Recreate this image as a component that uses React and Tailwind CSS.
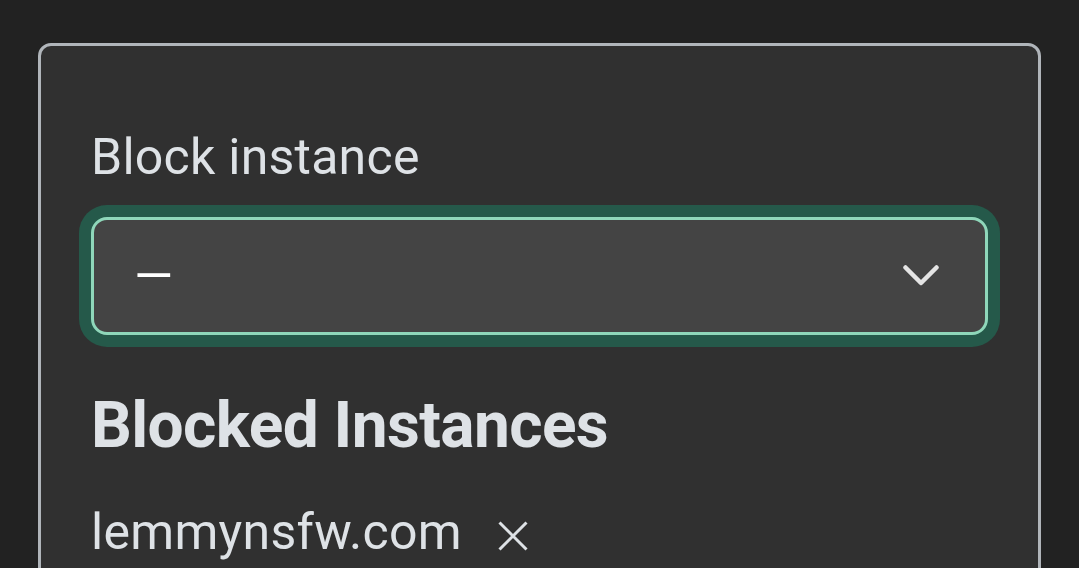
export default function App() {
  return (
    <div className="min-h-screen bg-[#222222] px-[38px] pt-[43px] font-['Roboto',sans-serif] text-[#dee2e6]">
      <div className="h-[560px] rounded-[13px] border-[3px] border-[#b0b5ba] bg-[#303030] px-[50px] pt-[74px]">
        <label className="block text-[50px] leading-[75px] tracking-[0.25px]">Block instance</label>
        <div className="mt-[22px] flex h-[118px] items-center justify-between rounded-[16px] border-[3px] border-[#8fd7ba] bg-[#444444] pl-[40px] pr-[46px] shadow-[0_0_0_12px_#25594a]">
          <span className="text-[50px] leading-none text-white">—</span>
          <svg width="36" height="22" viewBox="0 0 36 22" fill="none" className="text-[#e4e4e4]">
            <path d="M2.5 2.5 L18 18 L33.5 2.5" stroke="currentColor" strokeWidth="4.5" strokeLinecap="round" strokeLinejoin="round" />
          </svg>
        </div>
        <h2 className="mt-[52px] text-[64px] font-bold leading-[77px] tracking-[-0.6px]">Blocked Instances</h2>
        <ul className="mt-[31px]">
          <li className="flex items-center text-[50px] leading-[75px] tracking-[0.3px]">
            <span>lemmynsfw.com</span>
            <svg width="32" height="32" viewBox="0 0 32 32" fill="none" className="ml-[35px] mt-[6px] text-[#dee2e6]">
              <path d="M2.5 2.5 L29.5 29.5 M29.5 2.5 L2.5 29.5" stroke="currentColor" strokeWidth="3" />
            </svg>
          </li>
        </ul>
      </div>
    </div>
  )
}
